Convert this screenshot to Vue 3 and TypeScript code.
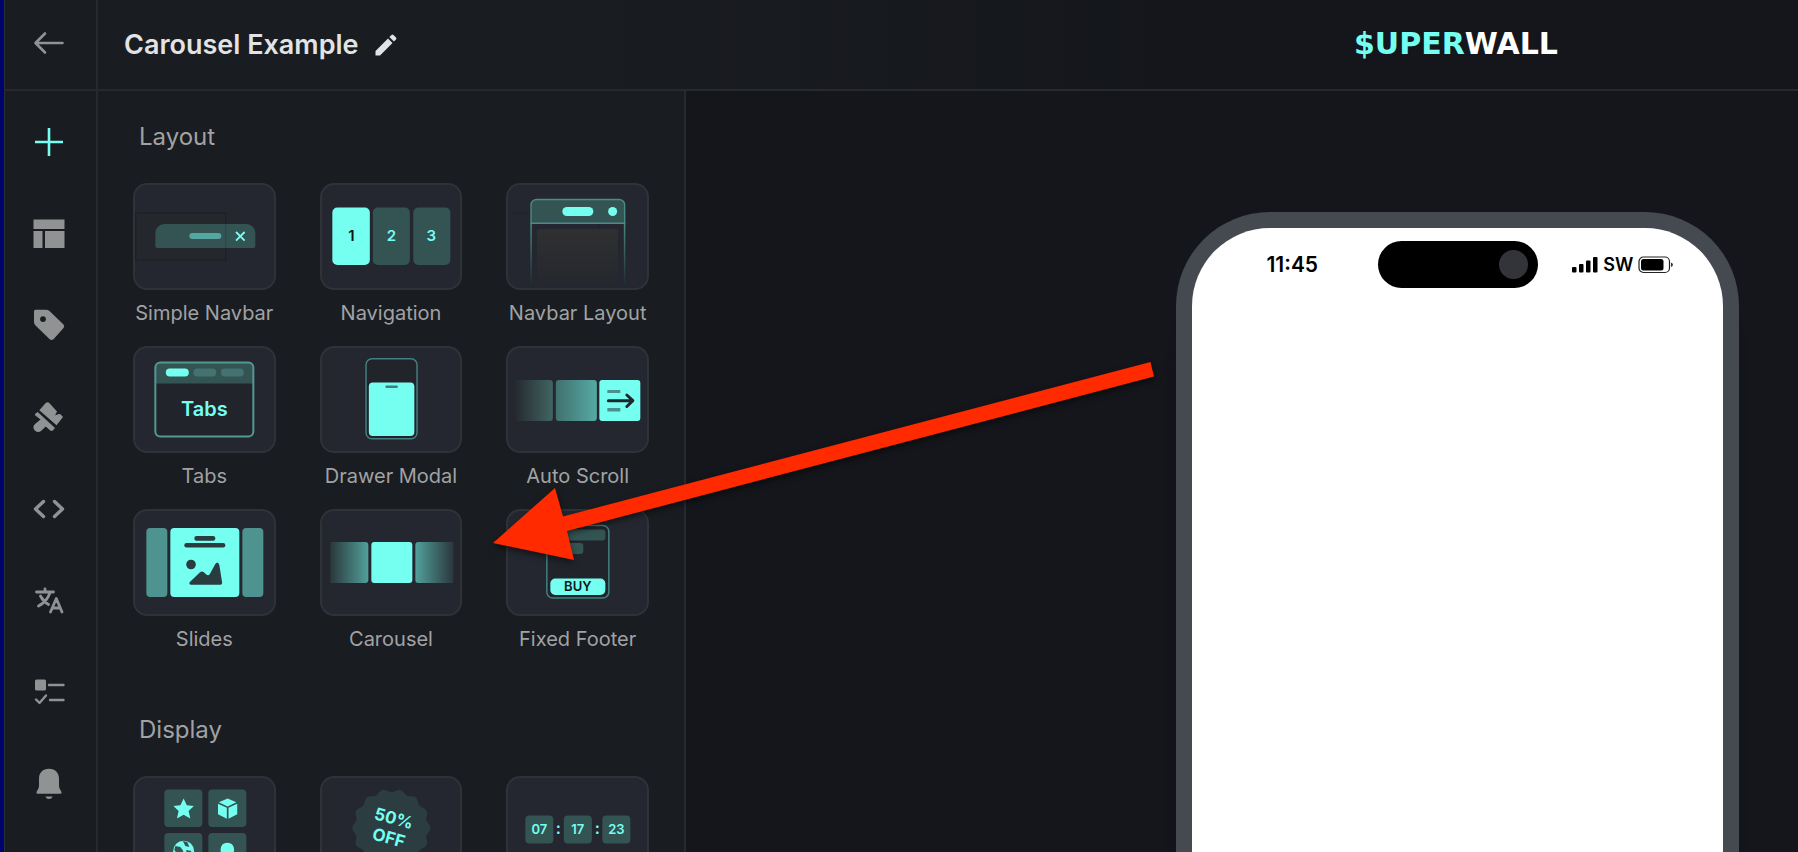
<script setup lang="ts">
interface Tile {
  id: string
  name: string
  caption?: string
}
interface Tool {
  id: string
  label: string
}

const tools: Tool[] = [
  { id: 'add', label: 'Add element' },
  { id: 'layout', label: 'Layout' },
  { id: 'tag', label: 'Products' },
  { id: 'brush', label: 'Theme' },
  { id: 'code', label: 'Code' },
  { id: 'translate', label: 'Localization' },
  { id: 'checklist', label: 'Checklist' },
  { id: 'bell', label: 'Notifications' },
]

const captioned = (id: string, name: string): Tile => ({ id, name, caption: name })

const layoutTiles: Tile[] = [
  captioned('navbar', 'Simple Navbar'),
  captioned('navigation', 'Navigation'),
  captioned('navlayout', 'Navbar Layout'),
  captioned('tabs', 'Tabs'),
  captioned('drawer', 'Drawer Modal'),
  captioned('autoscroll', 'Auto Scroll'),
  captioned('slides', 'Slides'),
  captioned('carousel', 'Carousel'),
  captioned('footer', 'Fixed Footer'),
]

const displayTiles: Tile[] = [
  { id: 'icons', name: 'Icon' },
  { id: 'badge', name: 'Badge' },
  { id: 'timer', name: 'Countdown' },
]

const sections = [
  { title: 'Layout', tiles: layoutTiles },
  { title: 'Display', tiles: displayTiles },
]

// Scalloped outline of the discount badge
const badgePath = (() => {
  const lobes = 14
  const points: string[] = []
  for (let i = 0; i <= 168; i++) {
    const a = (i / 168) * Math.PI * 2
    const r = 37.5 + 1.6 * Math.cos(a * lobes)
    points.push(`${(71 + r * Math.cos(a)).toFixed(2)} ${(52 + r * Math.sin(a)).toFixed(2)}`)
  }
  return `M${points.join('L')}Z`
})()
</script>

<template>
  <div class="app">
    <div class="back">
      <button type="button" class="icon-btn" aria-label="Back">
        <svg width="32" height="32" viewBox="0 0 32 32" fill="none" stroke="#919294" stroke-width="2.6" stroke-linecap="round" stroke-linejoin="round">
          <path d="M29.500 16H3M12 6.500L2.500 16L12 25.500" />
        </svg>
      </button>
    </div>

    <header class="header">
      <div class="title-group">
        <h1 class="title">Carousel Example</h1>
        <button type="button" class="icon-btn" aria-label="Rename">
          <svg width="22" height="22" viewBox="0 0 22 22" fill="#e2e3e4">
            <path d="M.5 17L13 4.500L17.500 9L5 21.500H.5ZM14.400 3.100L16.500 1Q17.500 0 18.500 1L21 3.500Q22 4.500 21 5.500L18.900 7.600Z" />
          </svg>
        </button>
      </div>
      <div class="brand"><span class="brand-accent">$UPER</span>WALL</div>
    </header>

    <nav class="rail" aria-label="Editor tools">
      <button v-for="tool in tools" :key="tool.id" type="button" class="rail-btn" :aria-label="tool.label">
        <svg width="32" height="32" viewBox="0 0 32 32" fill="#919294">
          <path v-if="tool.id === 'add'" d="M16 2V30M2 16H30" fill="none" stroke="#75fff0" stroke-width="2.6" />
          <path v-else-if="tool.id === 'layout'" d="M.5 1.500H31.500V11H.5ZM.5 13H9.500V30H.5ZM12 13H31.500V30H12Z" />
          <path
            v-else-if="tool.id === 'tag'"
            fill-rule="evenodd"
            d="M1 2.500Q1 .8 2.500 .8H13Q15 .8 16.500 2L30.500 15.500Q32 17.200 30.500 18.900L20.500 30.200Q18.600 31.700 16.700 30.200L2.300 16.200Q1 14.800 1 13ZM10 7.200A2.900 2.900 0 1 0 10 13A2.900 2.900 0 1 0 10 7.200Z"
          />
          <g v-else-if="tool.id === 'brush'">
            <path d="M6.300 9.300L12.700 2Q14.500 .5 16.300 2L24 10.500L22 14.500Q25.500 12.200 27.500 13.200L30 16L23.500 24.300Z" />
            <path d="M4.700 11L22 27L20 29.300Q18.500 30.500 17 29.300L12.700 25.500L8.500 29.500Q5.500 32.500 2 29.700Q-1.200 26.200 2 23L7.500 18.500L2.300 14.500Q1.700 13.500 2.500 12.500Z" />
          </g>
          <path v-else-if="tool.id === 'code'" d="M10.500 8.500L2.500 16L10.500 23.500M21.500 8.500L29.500 16L21.500 23.500" fill="none" stroke="#919294" stroke-width="3.400" stroke-linecap="round" stroke-linejoin="round" />
          <path
            v-else-if="tool.id === 'translate'"
            d="M3.500 7H20.500M12 4V7M17 7.500C15.500 12.500 12 17.500 5.500 21M7.500 11C9 14 12 17.500 15.500 19.500M17.500 27L23.300 13.500L29 27M19.500 23H27"
            fill="none"
            stroke="#919294"
            stroke-width="2.800"
            stroke-linecap="round"
            stroke-linejoin="round"
          />
          <g v-else-if="tool.id === 'checklist'">
            <rect x="2" y="3.500" width="11" height="11" rx="1.500" />
            <path d="M16 9H30.500M17 24H30.500M3 23.500L6.500 27L13 19.500" fill="none" stroke="#919294" stroke-width="2.400" stroke-linecap="round" stroke-linejoin="round" />
          </g>
          <path
            v-else
            d="M16 .8C9.800 .8 6 4.800 6 10.500V17.500Q6 19.500 5 21.300L3.500 24Q3 25.800 4.500 25.800H27.500Q29 25.800 28.500 24L27 21.300Q26 19.500 26 17.500V10.500C26 4.800 22.200 .8 16 .8ZM12.300 28.500H19.700Q18.500 31 16 31Q13.500 31 12.300 28.500Z"
          />
        </svg>
      </button>
    </nav>

    <div class="workspace">
      <aside class="panel">
        <section v-for="section in sections" :key="section.title" class="section">
          <h2 class="section-title">{{ section.title }}</h2>
          <div class="tiles">
            <button v-for="tile in section.tiles" :key="tile.id" type="button" class="tile" :aria-label="tile.name">
              <span class="card">
                <svg viewBox="0 0 142 107" class="art" aria-hidden="true">
                  <defs>
                    <linearGradient id="fade-frame" x1="0" y1="0" x2="0" y2="1">
                      <stop offset="0" stop-color="#4a8a87" />
                      <stop offset="1" stop-color="#4a8a87" stop-opacity="0" />
                    </linearGradient>
                    <linearGradient id="fade-body" x1="0" y1="0" x2="0" y2="1">
                      <stop offset="0" stop-color="#303031" />
                      <stop offset="1" stop-color="#24272e" />
                    </linearGradient>
                    <linearGradient id="fade-far">
                      <stop offset="0" stop-color="#25292f" />
                      <stop offset="1" stop-color="#426463" />
                    </linearGradient>
                    <linearGradient id="fade-near">
                      <stop offset="0" stop-color="#41706e" />
                      <stop offset="1" stop-color="#56aaa4" />
                    </linearGradient>
                    <linearGradient id="fade-left">
                      <stop offset="0" stop-color="#2b383c" />
                      <stop offset="1" stop-color="#52a09b" />
                    </linearGradient>
                    <linearGradient id="fade-right">
                      <stop offset="0" stop-color="#52a09b" />
                      <stop offset="1" stop-color="#2b383c" />
                    </linearGradient>
                  </defs>

                  <g v-if="tile.id === 'navbar'">
                    <rect x="2.500" y="30" width="90" height="47" fill="#24272b" stroke="#1b1e22" />
                    <path d="M31 41H113A9 9 0 0 1 122 50V63Q122 65 120 65H24Q22 65 22 63V50A9 9 0 0 1 31 41Z" fill="#345454" />
                    <path d="M92.500 41V65" stroke="#29474a" />
                    <rect x="56" y="50" width="32" height="6" rx="3" fill="#55a5a0" />
                    <path d="M102.700 49L111.300 57.700M111.300 49L102.700 57.700" stroke="#75fff0" stroke-width="1.800" />
                  </g>

                  <g v-else-if="tile.id === 'navigation'" class="mark digits">
                    <rect x="12" y="24.500" width="37.500" height="57.500" rx="5" fill="#75fff0" />
                    <rect x="52.500" y="24.500" width="37" height="57.500" rx="5" fill="#345454" />
                    <rect x="93" y="24.500" width="37" height="57.500" rx="5" fill="#345454" />
                    <text x="31" y="58" class="dark">1</text>
                    <text x="71" y="58">2</text>
                    <text x="111" y="58">3</text>
                  </g>

                  <g v-else-if="tile.id === 'navlayout'">
                    <path d="M2.500 30H92.500V70" fill="none" stroke="#1f2226" />
                    <path d="M24.500 40V103M118.500 40V103" stroke="#23282d" stroke-width="3" />
                    <path d="M24 40H25.500V103H24ZM117.500 40H119V103H117.500Z" fill="url(#fade-frame)" />
                    <path d="M24.700 40.300V22A5.500 5.500 0 0 1 30.200 16.500H112.800A5.500 5.500 0 0 1 118.300 22V40.300Z" fill="#345454" stroke="#4a8a87" stroke-width="1.400" />
                    <rect x="56" y="24" width="31" height="9" rx="4.500" fill="#75fff0" />
                    <circle cx="106.300" cy="28.500" r="4.500" fill="#75fff0" />
                    <rect x="30.700" y="46" width="81" height="57" rx="2" fill="url(#fade-body)" />
                  </g>

                  <g v-else-if="tile.id === 'tabs'" class="mark">
                    <rect x="22" y="16.500" width="98" height="74" rx="5" fill="#21252b" />
                    <path d="M22 37.500V21Q22 16 27 16H115Q120 16 120 21V37.500Z" fill="#345454" />
                    <rect x="22" y="16.500" width="98" height="74" rx="5" fill="none" stroke="#529995" stroke-width="2" />
                    <rect x="32.500" y="22.500" width="23" height="8" rx="4" fill="#75fff0" />
                    <rect x="60" y="22.500" width="23" height="8" rx="4" fill="#437270" />
                    <rect x="87.500" y="22.500" width="23" height="8" rx="4" fill="#437270" />
                    <text x="71" y="70" class="tabs-text">Tabs</text>
                  </g>

                  <g v-else-if="tile.id === 'drawer'">
                    <rect x="45.700" y="12.700" width="51" height="80" rx="6" fill="#21252b" stroke="#427f7e" stroke-width="1.500" />
                    <rect x="48.500" y="36.500" width="45.500" height="53.500" rx="4" fill="#75fff0" />
                    <rect x="65" y="39.500" width="12.500" height="2.500" rx="1.200" fill="#3f807d" />
                  </g>

                  <g v-else-if="tile.id === 'autoscroll'">
                    <path d="M8.500 34H43.500Q46.500 34 46.500 37V72Q46.500 75 43.500 75H8.500Z" fill="url(#fade-far)" />
                    <rect x="49.500" y="34" width="41" height="41" rx="3" fill="url(#fade-near)" />
                    <rect x="93" y="34" width="41" height="41" rx="3" fill="#75fff0" />
                    <path d="M101 44H114V47H101ZM101 62H114V65.500H101Z" fill="#4a908e" />
                    <path d="M102 54.700H126M120.500 49L126.500 54.700L120.500 60.500" fill="none" stroke="#20282d" stroke-width="3" stroke-linecap="round" stroke-linejoin="round" />
                  </g>

                  <g v-else-if="tile.id === 'slides'">
                    <rect x="13" y="19" width="21" height="69" rx="4" fill="#4e938f" />
                    <rect x="37" y="19" width="69" height="69" rx="4" fill="#75fff0" />
                    <rect x="109" y="19" width="21" height="69" rx="4" fill="#4e938f" />
                    <g fill="#293c40">
                      <rect x="61" y="27" width="21" height="4.700" rx="2.300" />
                      <rect x="51" y="34" width="41" height="4.500" rx="2.200" />
                      <circle cx="57.700" cy="55.500" r="4.800" />
                      <path d="M56.500 73L66.500 63.500Q68.500 61.500 70.500 63.300L73 65.500Q75.200 67.200 76.500 65L82 55Q84.500 51.500 86 56L88.800 73.500Q89 75.700 87 75.700H58Q55 75.500 56.500 73Z" />
                    </g>
                  </g>

                  <g v-else-if="tile.id === 'carousel'">
                    <path d="M10 33H45Q48 33 48 36V71Q48 74 45 74H10Z" fill="url(#fade-left)" />
                    <rect x="51" y="33" width="41" height="41" rx="3" fill="#75fff0" />
                    <path d="M133 33H98Q95 33 95 36V71Q95 74 98 74H133Z" fill="url(#fade-right)" />
                  </g>

                  <g v-else-if="tile.id === 'footer'" class="mark">
                    <rect x="40.500" y="16.500" width="62" height="72.500" rx="6" fill="#21252b" stroke="#427f7e" stroke-width="1.500" />
                    <rect x="44" y="20.500" width="55" height="11" rx="3" fill="#345454" />
                    <rect x="44" y="34" width="33" height="11" rx="3" fill="#345454" />
                    <rect x="44" y="69.500" width="55" height="16.500" rx="5" fill="#75fff0" />
                    <text x="71.500" y="82" class="dark buy-text">BUY</text>
                  </g>

                  <g v-else-if="tile.id === 'icons'">
                    <g fill="#345454">
                      <rect x="31" y="13.500" width="38" height="37.500" rx="4" />
                      <rect x="75" y="13.500" width="38" height="37.500" rx="4" />
                      <rect x="31" y="57" width="38" height="37.500" rx="4" />
                      <rect x="75" y="57" width="38" height="37.500" rx="4" />
                    </g>
                    <g fill="#75fff0">
                      <path d="M50.300 22.500L53.500 29.300L60.500 30L55.300 35L57 42.500L50.300 38.700L43.600 42.500L45.300 35L40.100 30L47.100 29.300Z" />
                      <path d="M94.300 22.500L103 26.300L94.300 30.500L85.500 26.300ZM84.700 27.800L93.500 31.800V42.700L84.700 38.300ZM103.900 27.800L95.200 31.800V42.700L103.900 38.300Z" />
                      <circle cx="50.300" cy="75.200" r="10.500" />
                      <path d="M94 66.700C88.500 66.700 87 71 87.300 75L89 82H99L100.700 75C101 71 99.500 66.700 94 66.700Z" />
                    </g>
                    <path d="M49 65L54 66L56 71L52 70L50 66ZM42 70L47 71L50 75L48 80L44 78L41 74ZM53 74L58 75L57 80L53 79Z" fill="#345454" />
                  </g>

                  <g v-else-if="tile.id === 'badge'" class="mark">
                    <path :d="badgePath" fill="#2b3d40" />
                    <g transform="rotate(15 71 52)" class="badge-text">
                      <text x="71" y="48">50%</text>
                      <text x="71" y="68">OFF</text>
                    </g>
                  </g>

                  <g v-else class="mark timer-text">
                    <g fill="#345454">
                      <rect x="19" y="39.500" width="28" height="28" rx="4" />
                      <rect x="57.500" y="39.500" width="28" height="28" rx="4" />
                      <rect x="96" y="39.500" width="28" height="28" rx="4" />
                    </g>
                    <text x="33" y="58">07</text>
                    <text x="52" y="58" class="colon">:</text>
                    <text x="71.500" y="58">17</text>
                    <text x="91" y="58" class="colon">:</text>
                    <text x="110" y="58">23</text>
                  </g>
                </svg>
              </span>
              <span v-if="tile.caption" class="tile-label">{{ tile.caption }}</span>
            </button>
          </div>
        </section>
      </aside>

      <main class="canvas">
        <div class="phone">
          <div class="status">
            <span class="clock">11:45</span>
            <span class="island"><span class="lens"></span></span>
            <span class="signal">
              <svg width="26" height="16" viewBox="0 0 26 16" fill="#000">
                <rect x="0" y="10" width="4.500" height="5.500" rx="1" />
                <rect x="7" y="7" width="4.500" height="8.500" rx="1" />
                <rect x="14" y="3.500" width="4.500" height="12" rx="1" />
                <rect x="21" y="0" width="4.500" height="15.500" rx="1" />
              </svg>
              <span>SW</span>
              <svg width="35" height="18" viewBox="0 0 35 18">
                <rect x="1" y="1" width="30.500" height="15.500" rx="4.500" fill="none" stroke="#222" stroke-width="1.200" />
                <rect x="3" y="3" width="22.500" height="11.500" rx="2.500" fill="#000" />
                <path d="M33 6.500Q35 7.200 35 8.800Q35 10.400 33 11Z" fill="#333" />
              </svg>
            </span>
          </div>
        </div>
      </main>
    </div>

    <svg class="pointer" width="1180" height="600" viewBox="0 0 1180 600" aria-hidden="true">
      <path d="M493 543L555 488L563 516.500L1150.500 362L1154 376.500L567 531L574 560Z" fill="#ff2a00" />
    </svg>
  </div>
</template>

<style>
body {
  margin: 0;
  background: #14161b;
}
</style>

<style scoped>
.app {
  position: relative;
  display: grid;
  grid-template-columns: 94px minmax(0, 1fr);
  grid-template-rows: 91px minmax(0, 1fr);
  height: 100vh;
  overflow: hidden;
  box-sizing: border-box;
  border-left: 4px solid #00036c;
  background: #191c20;
  color: #a1a2a4;
  font-family: Inter, Roboto, sans-serif;
}
button {
  margin: 0;
  padding: 0;
  border: 0;
  background: none;
  color: inherit;
  font: inherit;
  cursor: pointer;
}
svg {
  display: block;
}
.icon-btn {
  display: block;
}
.back,
.rail {
  box-sizing: border-box;
  border-left: 1px solid #2a2d31;
  border-right: 2px solid #27292e;
}
.back {
  display: flex;
  align-items: center;
  justify-content: center;
  padding: 0 3px 3px 0;
  border-bottom: 2px solid #27292e;
}
.header {
  display: flex;
  align-items: center;
  justify-content: space-between;
  padding: 0 240px 0 26px;
  border-bottom: 2px solid #27292e;
  background: linear-gradient(90deg, #191c20 30%, #14161b 65%);
}
.title-group {
  display: flex;
  align-items: center;
  gap: 16px;
}
.title {
  margin: 0;
  color: #e2e3e4;
  font-size: 27px;
  font-weight: 600;
  line-height: 36px;
}
.brand {
  padding-bottom: 2px;
  color: #fff;
  font-family: "DejaVu Sans", Inter, sans-serif;
  font-size: 30px;
  font-weight: 700;
  line-height: 36px;
}
.brand-accent {
  color: #75fff0;
}
.rail {
  display: flex;
  flex-direction: column;
  padding: 5px 3px 22px 0;
}
.rail-btn {
  display: flex;
  flex: 1;
  align-items: center;
  justify-content: center;
}
.workspace {
  display: flex;
  min-height: 0;
}
.panel {
  flex: 0 0 588px;
  box-sizing: border-box;
  padding: 28px 35px 0;
  overflow: hidden;
  border-right: 2px solid #27292e;
}
.section {
  margin-bottom: 58px;
}
.section-title {
  margin: 0 6px 28px;
  font-size: 24px;
  font-weight: 400;
  line-height: 36px;
}
.tiles {
  display: grid;
  grid-template-columns: repeat(3, minmax(0, 1fr));
  gap: 18px 44px;
}
.tile {
  display: block;
}
.card {
  display: block;
  position: relative;
  box-sizing: border-box;
  height: 107px;
  overflow: hidden;
  border-radius: 14px;
  background: #24272f;
}
.card::after {
  content: "";
  position: absolute;
  inset: 0;
  border: 2px solid #2f3236;
  border-radius: 14px;
}
.art {
  width: 100%;
  height: 100%;
}
.tile-label {
  display: block;
  padding-top: 8px;
  font-size: 20px;
  line-height: 30px;
  white-space: nowrap;
}
.mark {
  fill: #75fff0;
  font-weight: 600;
  text-anchor: middle;
}
.dark {
  fill: #101416;
}
.digits {
  font-size: 15px;
}
.tabs-text {
  font-size: 20px;
}
.buy-text {
  font-size: 13px;
}
.badge-text {
  font-size: 17px;
  font-weight: 700;
}
.timer-text {
  font-size: 13px;
}
.colon {
  font-size: 16px;
}
.canvas {
  display: flex;
  flex: 1;
  justify-content: flex-end;
  min-width: 0;
  padding: 121px 59px 0 0;
  background: #14161b;
}
.phone {
  box-sizing: border-box;
  width: 563px;
  border: 16px solid #444a50;
  border-bottom: 0;
  border-radius: 94px 94px 0 0;
  background: #fff;
  box-shadow: 0 60px 16px -8px #0e1013;
}
.status {
  display: grid;
  grid-template-columns: 1fr 160px 1fr;
  align-items: center;
  padding: 13px 15px 0;
  color: #000;
}
.clock {
  font-size: 21px;
  font-weight: 600;
  text-align: center;
}
.island {
  display: flex;
  align-items: center;
  justify-content: flex-end;
  box-sizing: border-box;
  height: 47px;
  padding-right: 10px;
  border-radius: 24px;
  background: #000;
}
.lens {
  width: 29px;
  height: 29px;
  border-radius: 50%;
  background: #323439;
}
.signal {
  display: flex;
  align-items: center;
  justify-content: center;
  gap: 5px;
  font-size: 18px;
  font-weight: 600;
}
.pointer {
  position: absolute;
  top: 0;
  left: -4px;
  pointer-events: none;
  filter: drop-shadow(0 3px 3px rgba(0, 0, 0, 0.5));
}
</style>
